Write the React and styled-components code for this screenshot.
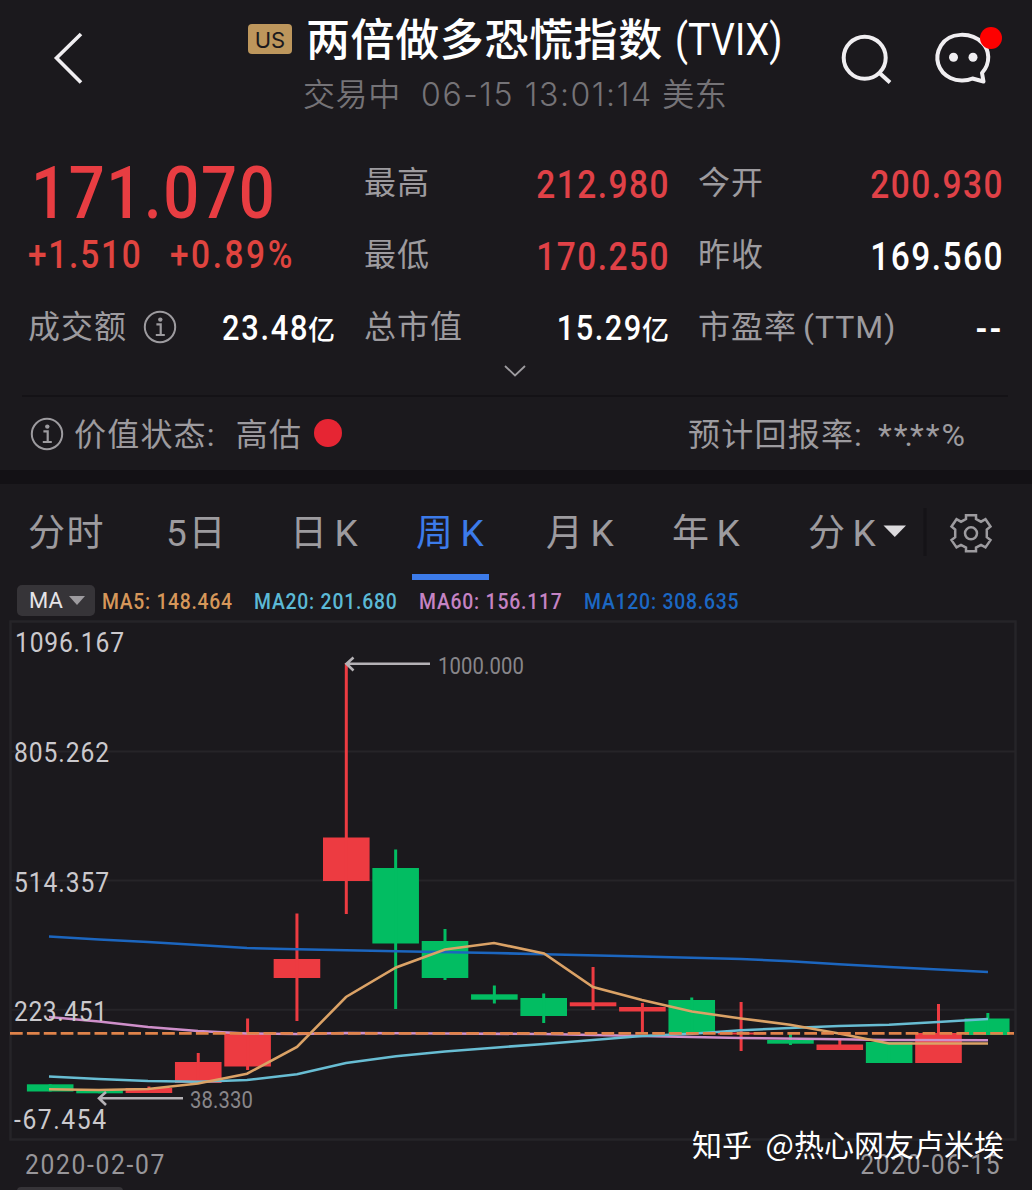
import styled, { createGlobalStyle } from "styled-components";

const GlobalStyle = createGlobalStyle`
  * {
    box-sizing: border-box;
  }
  body {
    margin: 0;
    background: #1b191d;
  }
`;

const DIN = `Roboto, "Noto Sans CJK SC", sans-serif`;

const Page = styled.div`
  position: relative;
  width: 1032px;
  height: 1190px;
  overflow: hidden;
  background: #1b191d;
  color: #9d9b9f;
  font-family: ${DIN};
  white-space: pre;
`;

// narrow, widely tracked figures
const Digits = styled.span`
  display: inline-block;
  transform: scaleX(0.88);
  transform-origin: ${(p) => (p.$right ? "right" : "left")} center;
  letter-spacing: ${(p) => p.$track ?? 1.7}px;
  margin-right: ${(p) => (p.$right ? -1 : 0)}px;
`;

const Header = styled.header`
  display: flex;
  height: 148px;
  padding-left: 48px;
`;

const HeaderIcon = styled.svg`
  display: block;
  flex: none;
  fill: none;
  stroke: #f0eef1;
`;

const TitleBlock = styled.div`
  display: flex;
  flex-direction: column;
  width: 582px;
  margin-left: 160px;
`;

const TitleLine = styled.div`
  display: flex;
  align-items: center;
  height: 78px;
  color: #fff;
`;

const Market = styled.span`
  width: 44px;
  height: 30px;
  border-radius: 4px;
  background: #bd965c;
  color: #1b191d;
  font: 400 22px/32px Inter, sans-serif;
  text-align: center;
`;

const StockName = styled.span`
  margin-left: 14px;
  padding-top: 3px;
  font-size: 44px;
  line-height: 80px;
  font-weight: 500;
  letter-spacing: 0.6px;
`;

const Ticker = styled.span`
  margin-left: 12px;
  padding-top: 1px;
  font-size: 44px;
  line-height: 78px;
  font-weight: 400;
  transform: scaleX(0.86);
  transform-origin: left;
`;

const TradeTime = styled.div`
  color: #757377;
  margin-left: 55px;
  font: 350 32px/34px Inter, "Noto Sans CJK SC", sans-serif;
  letter-spacing: 0.6px;
`;

const Clock = styled.span`
  margin-left: 1px;
  letter-spacing: 1.6px;
`;

const Quote = styled.section`
  display: grid;
  grid-template-columns: 307px 305px 305px;
  column-gap: 29px;
  padding-left: 28px;
`;

const Column = styled.div`
  display: flex;
  flex-direction: column;
`;

const Cell = styled.div`
  display: flex;
  justify-content: space-between;
  height: 72px;
`;

const Label = styled.span`
  display: flex;
  align-items: center;
  gap: 16px;
  height: 70px;
  font-size: 32px;
  font-weight: 400;
  line-height: 70px;
  letter-spacing: 1px;
  word-spacing: -3px;
`;

const Value = styled.span`
  color: ${(p) => (p.$up ? "#e04147" : "#fff")};
  font-size: ${(p) => (p.$amount ? 35 : 38)}px;
  font-weight: 500;
  line-height: 74px;
`;

const Unit = styled.span`
  font-size: 27px;
  font-weight: 500;
`;

const Price = styled.div`
  height: 72px;
  padding-left: 3px;
  color: #e83d42;
  font-size: 72px;
  font-weight: 500;
  line-height: 92px;
`;

const Change = styled.div`
  display: flex;
  gap: 12px;
  height: 72px;
  color: #e0443f;
  font-size: 38px;
  font-weight: 500;
  line-height: 70px;
`;

const MoreRow = styled.div`
  display: flex;
  justify-content: center;
  height: 33px;
  margin: 0 24px 0 22px;
  border-bottom: 2px solid #141216;
`;

const Status = styled.section`
  display: flex;
  align-items: center;
  height: 73px;
  padding: 0 65px 0 30px;
  font-size: 32px;
  font-weight: 400;
  letter-spacing: 1.2px;
`;

const StatusText = styled.span`
  margin-left: ${(p) => p.$gap}px;
  padding-bottom: 4px;
`;

const Dot = styled.i`
  width: 28px;
  height: 28px;
  margin: -2px 0 0 12px;
  border-radius: 50%;
  background: #e62533;
`;

const Forecast = styled.span`
  margin-left: auto;
  padding-bottom: 4px;
`;

const MaskedRate = styled.span`
  margin-left: 5px;
  letter-spacing: 2px;
`;

const Point = styled.span`
  margin: 0 -5px;
`;

const Tabs = styled.nav`
  display: flex;
  height: 110px;
  padding: 14px 0 0 28px;
  border-top: 14px solid #131115;
`;

const Tab = styled.div`
  display: flex;
  flex: none;
  width: ${(p) => p.$width}px;
  height: 82px;
  color: ${(p) => (p.$active ? "#3c7bea" : "#9d9b9f")};
  font-size: 37px;
  font-weight: 400;
  line-height: 72px;
  letter-spacing: 1.6px;
  word-spacing: -5px;
`;

const TabLabel = styled.span`
  display: block;
  height: 82px;
  margin-left: ${(p) => (p.$active ? -4 : 0)}px;
  padding: 0 ${(p) => (p.$active ? 4 : 0)}px;
  border-bottom: ${(p) => (p.$active ? "6px solid #3c7bea" : "0")};
`;

const Legend = styled.div`
  display: flex;
  align-items: center;
  height: 36px;
  padding: 5px 0 0 17px;
  font-size: 22px;
  line-height: 34px;
`;

const Indicator = styled.span`
  display: flex;
  align-items: center;
  gap: 6px;
  width: 78px;
  height: 31px;
  margin-right: 7px;
  padding: 1px 0 0 12px;
  border-radius: 5px;
  background: #363438;
  color: #e6e4e8;
`;

const Average = styled.span`
  width: ${(p) => p.$width}px;
  padding-top: 2px;
  color: ${(p) => p.$color};
  font-weight: 500;
`;

const Chart = styled.svg`
  display: block;
  font-family: ${DIN};
`;

const Dates = styled.footer`
  display: flex;
  justify-content: space-between;
  padding: 0 32px 0 25px;
  color: #98969a;
  font-size: 28px;
  line-height: 47px;
`;

const NextPanel = styled.div`
  width: 106px;
  height: 8px;
  margin: -1px 0 0 17px;
  border-radius: 5px;
  background: #363438;
`;

const Watermark = styled.div`
  position: absolute;
  right: 28px;
  bottom: 26px;
  color: #fff;
  font: 400 30px/42px "Noto Sans CJK SC", sans-serif;
  word-spacing: 7px;
`;

const UP = "#ed3b41";
const DOWN = "#02bd62";

// [direction, body top, body bottom, wick top, wick bottom]
const candles = [
  [DOWN, 1084.3, 1091.5, 1084.3, 1091.5],
  [DOWN, 1089.5, 1093.3, 1089.5, 1093.3],
  [UP, 1088, 1093, 1086.5, 1093],
  [UP, 1062, 1083, 1053, 1083],
  [UP, 1033, 1066.5, 1018.5, 1070],
  [UP, 959, 978, 913.5, 1021],
  [UP, 837.5, 881, 663, 914],
  [DOWN, 868, 943.5, 849.5, 1009],
  [DOWN, 941, 978, 929, 980],
  [DOWN, 994.3, 999.7, 985.5, 1003.5],
  [DOWN, 998, 1016, 993.5, 1023],
  [UP, 1002.3, 1006.3, 967, 1010],
  [UP, 1007, 1011.5, 1003, 1034],
  [DOWN, 1000, 1034, 997.5, 1034],
  [UP, 1032.5, 1034.5, 1002, 1051],
  [DOWN, 1040, 1043.7, 1034, 1045],
  [UP, 1044.5, 1050, 1040, 1050],
  [DOWN, 1042, 1063, 1042, 1063],
  [UP, 1033, 1063, 1004, 1063],
  [DOWN, 1018.5, 1035, 1013, 1035],
];

const candleX = (i) => 50.2 + i * 49.35;

const lines = [
  {
    color: "#1c66bf",
    points:
      "49,936.5 99,939.5 148,942 198,945 247,948 297,949.3 396,951.3 494,953 544,954.3 642,956.5 741,959 790,961.2 839,964.3 889,967 988,972",
  },
  {
    color: "#cf8fca",
    points:
      "49,1017 99,1021.5 148,1027 198,1031 247,1033.5 297,1034 346,1033 445,1033.5 544,1034 593,1035 642,1036 741,1038 839,1039.3 889,1040 988,1040.3",
  },
  {
    color: "#68bdd3",
    points:
      "49,1076.5 99,1079 148,1081 198,1081.7 247,1080 297,1074.3 346,1063 396,1056.3 445,1051.5 494,1047.7 544,1044 593,1040 642,1036 692,1033.7 741,1030.3 790,1028 839,1026 889,1024.7 938,1022 988,1019",
  },
  {
    color: "#dba266",
    points:
      "49,1089.3 99,1090 148,1089 198,1083.5 247,1073.7 297,1047 346,997 396,967.5 445,949.5 494,943 544,953.5 593,987 642,1000 692,1011.5 741,1018.5 790,1024.7 839,1033.5 889,1043.5 988,1043.5",
  },
];

const scale = [
  ["1096.167", 15, 652.3, 109],
  ["805.262", 14, 762, 95],
  ["514.357", 14, 891.7, 95],
  ["223.451", 14, 1020.7, 93],
  ["-67.454", 14, 1128.7, 92],
];

const tabs = [
  ["分时", 138],
  ["5日", 124],
  ["日 K", 126],
  ["周 K", 130],
  ["月 K", 126],
  ["年 K", 136],
];

const InfoIcon = () => (
  <svg width="34" height="34" viewBox="0 0 34 34" fill="none" stroke="#9d9b9f">
    <circle cx="17" cy="17" r="15.200" strokeWidth="2" />
    <circle cx="17.300" cy="9.600" r="2.200" fill="#9d9b9f" stroke="none" />
    <path d="M13.400 14.400h4.300v10.400M12.800 25h9" strokeWidth="2.200" />
  </svg>
);

const ChartText = ({ x, y, width, children }) => (
  <text transform={`translate(${x} ${y}) scale(0.88 1)`} textLength={width / 0.88}>
    {children}
  </text>
);

const TopBar = () => (
  <Header>
    <HeaderIcon width="40" height="100" viewBox="48 0 40 100" strokeWidth="3.600">
      <path d="M81 34 56.500 58 81 82.500" />
    </HeaderIcon>
    <TitleBlock>
      <TitleLine>
        <Market>US</Market>
        <StockName>两倍做多恐慌指数</StockName>
        <Ticker>(TVIX)</Ticker>
      </TitleLine>
      <TradeTime>
        交易中  <Clock>06-15 13:01:14</Clock> 美东
      </TradeTime>
    </TitleBlock>
    <HeaderIcon width="190" height="100" viewBox="830 0 190 100" strokeWidth="4">
      <circle cx="864.700" cy="57.700" r="21" />
      <path d="M879.500 73 890 82.500" />
      <path
        strokeLinejoin="round"
        d="M982 73C991 63 989.500 50 982.500 43C971 31.500 949 32 941 45.500C933.500 58 938 72 950.500 78C957 81 966 81.500 972.500 78.500L983.500 81.500Z"
      />
      <circle cx="953.500" cy="57.300" r="4.500" fill="#f0eef1" stroke="none" />
      <circle cx="973" cy="57.300" r="4.500" fill="#f0eef1" stroke="none" />
      <circle cx="991" cy="38" r="11" fill="#fe0000" stroke="none" />
    </HeaderIcon>
  </Header>
);

const QuotePanel = () => (
  <>
    <Quote>
      <Column>
        <Price>
          <Digits $track={1.900}>171.070</Digits>
        </Price>
        <Change>
          <Digits $track={2}>+1.510</Digits>
          <Digits $track={2.900}>+0.89%</Digits>
        </Change>
        <Cell>
          <Label>
            成交额
            <InfoIcon />
          </Label>
          <Value $amount>
            <Digits $right $track={2}>
              23.48
            </Digits>
            <Unit>亿</Unit>
          </Value>
        </Cell>
      </Column>
      <Column>
        <Cell>
          <Label>最高</Label>
          <Value $up>
            <Digits $right>212.980</Digits>
          </Value>
        </Cell>
        <Cell>
          <Label>最低</Label>
          <Value $up>
            <Digits $right>170.250</Digits>
          </Value>
        </Cell>
        <Cell>
          <Label>总市值</Label>
          <Value $amount>
            <Digits $right>15.29</Digits>
            <Unit>亿</Unit>
          </Value>
        </Cell>
      </Column>
      <Column>
        <Cell>
          <Label>今开</Label>
          <Value $up>
            <Digits $right>200.930</Digits>
          </Value>
        </Cell>
        <Cell>
          <Label>昨收</Label>
          <Value>
            <Digits $right>169.560</Digits>
          </Value>
        </Cell>
        <Cell>
          <Label>市盈率 (TTM)</Label>
          <Value>
            <Digits $right $track={3}>
              --
            </Digits>
          </Value>
        </Cell>
      </Column>
    </Quote>
    <MoreRow>
      <svg width="24" height="14" viewBox="0 0 24 14" fill="none" stroke="#9d9b9f" strokeWidth="1.800">
        <path d="M2 2l10 9.500L22 2" />
      </svg>
    </MoreRow>
  </>
);

const PeriodTabs = () => (
  <Tabs>
    {tabs.map(([name, width]) => (
      <Tab key={name} $width={width} $active={name === "周 K"}>
        <TabLabel $active={name === "周 K"}>{name}</TabLabel>
      </Tab>
    ))}
    <Tab $width={74}>分 K</Tab>
    <svg width="120" height="82" viewBox="882 498 120 82" fill="none">
      <path d="M883.500 525.500h22.500l-11.200 11.500z" fill="#dcdadd" />
      <path d="M925 508v48" stroke="#151317" strokeWidth="3" />
      <g stroke="#9d9b9f" strokeWidth="2.500">
        <circle cx="971" cy="533.300" r="6" />
        <path d="M966 515.300h10v3.700l5 2.700 4.500-2.500 5 7.300-3.700 3v7.600l3.700 3-5 7.300-4.500-2.500-5 2.700v3.700h-10v-3.700l-5-2.700-4.500 2.500-5-7.300 3.700-3v-7.600l-3.700-3 5-7.300 4.500 2.500 5-2.700z" />
      </g>
    </svg>
  </Tabs>
);

const KLineChart = () => (
  <Chart width="1032" height="525" viewBox="0 616 1032 525">
    <g fill="none" stroke="#262428" strokeWidth="2">
      <rect x="10.500" y="621.500" width="1005" height="518" strokeWidth="2.500" />
      <path d="M11 751.500H1015M11 880.500H1015M11 1009.700H1015" />
    </g>
    {candles.map(([color, top, bottom, high, low], i) => (
      <g key={i} fill={color}>
        <rect x={candleX(i) - 23.3} y={top} width={i === 19 ? 45 : 46.6} height={bottom - top} />
        <rect x={candleX(i) - 1.5} y={high} width="3" height={low - high} />
      </g>
    ))}
    {lines.map(({ color, points }) => (
      <polyline key={color} points={points} fill="none" stroke={color} strokeWidth="2.600" />
    ))}
    <path d="M10 1033.400H1014" stroke="#e0834a" strokeWidth="2.600" strokeDasharray="12.700 4.200" />
    <g fill="none" stroke="#b5b2b6" strokeWidth="2.600">
      <path d="M430 663.800H347M353.500 657.500 346.500 663.800 353.500 670.500" />
      <path d="M183 1098.300H99M106 1092 99 1098.300 106 1105" />
    </g>
    <g fill="#88868a" fontSize="23">
      <ChartText x={438} y={673.5} width={86}>
        1000.000
      </ChartText>
      <ChartText x={190} y={1107.5} width={63}>
        38.330
      </ChartText>
    </g>
    <g fill="#cbc9cd" fontSize="28" fontWeight="450">
      {scale.map(([value, x, y, width]) => (
        <ChartText key={value} x={x} y={y} width={width}>
          {value}
        </ChartText>
      ))}
    </g>
  </Chart>
);

const App = () => (
  <Page>
    <GlobalStyle />
    <TopBar />
    <QuotePanel />
    <Status>
      <InfoIcon />
      <StatusText $gap={10}>价值状态:</StatusText>
      <StatusText $gap={20}>高估</StatusText>
      <Dot />
      <Forecast>
        预计回报率:
        <MaskedRate>
          {" "}
          **<Point>.</Point>**%
        </MaskedRate>
      </Forecast>
    </Status>
    <PeriodTabs />
    <Legend>
      <Indicator>
        MA
        <svg width="16" height="10" viewBox="0 0 16 10">
          <path d="M0 0h16l-8 9z" fill="#9d9b9f" />
        </svg>
      </Indicator>
      <Average $width={152} $color="#d6975a">
        <Digits $track={0.800}>MA5: 148.464</Digits>
      </Average>
      <Average $width={165} $color="#5cb9d6">
        <Digits $track={0.900}>MA20: 201.680</Digits>
      </Average>
      <Average $width={165} $color="#c583c3">
        <Digits $track={0.900}>MA60: 156.117</Digits>
      </Average>
      <Average $width={170} $color="#1c68c4">
        <Digits $track={0.900}>MA120: 308.635</Digits>
      </Average>
    </Legend>
    <KLineChart />
    <Dates>
      <Digits $track={1.900}>2020-02-07</Digits>
      <Digits $right $track={1.900}>
        2020-06-15
      </Digits>
    </Dates>
    <NextPanel />
    <Watermark>知乎 @热心网友卢米埃</Watermark>
  </Page>
);

export default App;
